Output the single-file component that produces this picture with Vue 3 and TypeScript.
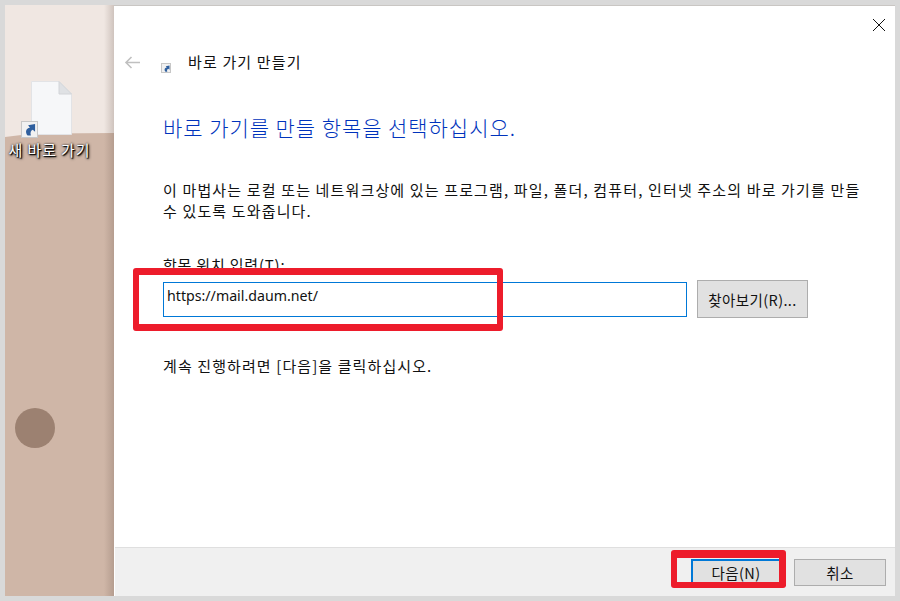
<script setup lang="ts">
const title: string = '바로 가기 만들기'
</script>

<template>
  <div class="page">
    <aside class="desktop">
      <div class="wall-top"></div>
      <div class="shortcut">
        <div class="file">
          <svg width="41" height="54" viewBox="0 0 41 54">
            <path d="M0.5 0.5H28L40.5 13V53.5H0.5Z" fill="#f6f7f9" stroke="#e2e3e6" />
            <path d="M28 0.5V13H40.5Z" fill="#dfe1e4" stroke="#d2d4d8" />
          </svg>
          <div class="badge">
            <svg width="13" height="13" viewBox="0 0 14 14">
              <path d="M5 13.500C2 10 3 5.500 7.500 5L5.500 2.500L13 1V9.500L10.500 7.300C8.500 8 7.500 10.500 8.500 13.500Z" fill="#2f5f9e" />
            </svg>
          </div>
        </div>
        <div class="label">새 바로 가기</div>
      </div>
      <div class="circle"></div>
      <div class="shade"></div>
    </aside>

    <main class="dialog">
      <div class="content">
        <div class="close">
          <svg width="14" height="14" viewBox="0 0 14 14">
            <path d="M1 1L13 13M13 1L1 13" stroke="#111" stroke-width="1" fill="none" />
          </svg>
        </div>
        <header class="titlebar">
          <svg class="back" width="17" height="13" viewBox="0 0 17 13">
            <path d="M16 6.500H2M7.500 1L2 6.500L7.500 12" stroke="#c0c0c0" stroke-width="1.600" fill="none" />
          </svg>
          <div class="mini">
            <svg width="7" height="7" viewBox="0 0 14 14">
              <path d="M5 13.500C2 10 3 5.500 7.500 5L5.500 2.500L13 1V9.500L10.500 7.300C8.500 8 7.500 10.500 8.500 13.500Z" fill="#2f5f9e" />
            </svg>
          </div>
          <span class="title">{{ title }}</span>
        </header>

        <h1 class="heading">바로 가기를 만들 항목을 선택하십시오.</h1>
        <p class="desc">이 마법사는 로컬 또는 네트워크상에 있는 프로그램, 파일, 폴더, 컴퓨터, 인터넷 주소의 바로 가기를 만들<br />수 있도록 도와줍니다.</p>
        <div class="field-label">항목 위치 입력(T):</div>
        <div class="field-row">
          <div class="input">https://mail.daum.net/</div>
          <div class="btn browse">찾아보기(R)...</div>
        </div>
        <p class="hint">계속 진행하려면 [다음]을 클릭하십시오.</p>
      </div>

      <footer class="footer">
        <div class="btn next">다음(N)</div>
        <div class="btn cancel">취소</div>
      </footer>
    </main>

    <div class="mark mark-input"></div>
    <div class="mark mark-next"></div>
  </div>
</template>

<style>
html, body { margin: 0; padding: 0; }
</style>

<style scoped>
.page {
  position: relative;
  width: 900px;
  height: 601px;
  box-sizing: border-box;
  padding: 5px;
  background: #d9d9d9;
  display: flex;
  overflow: hidden;
  font-family: "Noto Sans CJK KR", "Noto Sans", sans-serif;
  color: #111;
}
.desktop {
  position: relative;
  width: 109px;
  flex: none;
  background: #cfb6a7;
  overflow: hidden;
}
.wall-top {
  height: 132px;
  background: #f0e7e2;
  clip-path: polygon(0 0, 100% 0, 100% 128px, 40% 128.500px, 15% 130px, 0 132px);
}
.shortcut {
  position: absolute;
  left: 0;
  top: 76px;
  width: 100%;
  display: flex;
  flex-direction: column;
  align-items: center;
}
.file {
  position: relative;
  width: 41px;
  height: 54px;
  margin-left: -16px;
  line-height: 0;
}
.badge {
  position: absolute;
  left: -10px;
  top: 40px;
  width: 17px;
  height: 17px;
  box-sizing: border-box;
  background: #f1f1f1;
  border: 1px solid #c7c7c7;
  display: flex;
  align-items: center;
  justify-content: center;
}
.label {
  margin-top: 5px;
  margin-left: -20px;
  font-size: 15px;
  line-height: 20px;
  letter-spacing: 0.9px;
  color: #fff;
  white-space: nowrap;
  text-shadow: 1px 1px 1px #000, 1px 1px 3px #000, 0 0 2px #222;
}
.circle {
  position: absolute;
  left: 10px;
  top: 403px;
  width: 40px;
  height: 40px;
  border-radius: 50%;
  background: #9c8171;
}
.shade {
  position: absolute;
  right: 0;
  top: 0;
  bottom: 0;
  width: 10px;
  background: linear-gradient(to right, rgba(90, 70, 60, 0), rgba(90, 70, 60, 0.22));
}
.dialog {
  flex: 1;
  margin-top: 1px;
  display: flex;
  flex-direction: column;
  background: #fff;
  box-shadow: 0 -1px 0 #c9c6c3;
}
.content {
  position: relative;
  flex: 1;
  padding: 0 0 0 49px;
}
.close {
  position: absolute;
  right: 9px;
  top: 12px;
  width: 14px;
  height: 14px;
  line-height: 0;
}
.titlebar {
  display: flex;
  align-items: center;
  height: 20px;
  margin-top: 46px;
  margin-left: -39px;
}
.back {
  flex: none;
}
.mini {
  width: 8px;
  height: 8px;
  margin-left: 20px;
  margin-top: 12px;
  background: #f1f1f1;
  border: 1px solid #c7c7c7;
  display: flex;
  align-items: center;
  justify-content: center;
  flex: none;
}
.title {
  margin-left: 17px;
  font-size: 15px;
  line-height: 20px;
  letter-spacing: 1.150px;
  color: #111;
}
.heading {
  margin: 40px 0 0;
  font-size: 21px;
  line-height: 30px;
  font-weight: 300;
  letter-spacing: 0.950px;
  color: #0033bc;
}
.desc {
  margin: 37px 0 0;
  font-size: 15px;
  line-height: 21px;
  letter-spacing: 1.150px;
  white-space: nowrap;
  color: #111;
}
.field-label {
  margin-top: 34px;
  margin-bottom: 7px;
  font-size: 15px;
  line-height: 20px;
  height: 20px;
  letter-spacing: 0.8px;
  color: #111;
}
.field-row {
  display: flex;
  align-items: flex-start;
  gap: 10px;
}
.input {
  width: 524px;
  height: 35px;
  box-sizing: border-box;
  border: 1px solid #0078d7;
  padding: 3px 0 0 3px;
  font-size: 14.200px;
  line-height: 20px;
  color: #111;
  font-family: "Noto Sans", "Noto Sans CJK KR", sans-serif;
}
.btn {
  box-sizing: border-box;
  background: #e1e1e1;
  border: 1px solid #adadad;
  display: flex;
  align-items: center;
  justify-content: center;
  font-size: 14.500px;
  letter-spacing: 0.4px;
  color: #111;
  white-space: nowrap;
}
.browse {
  width: 111px;
  height: 38px;
  margin-top: -2px;
}
.hint {
  margin: 37px 0 0;
  font-size: 15px;
  line-height: 22px;
  letter-spacing: 1.100px;
  color: #111;
}
.footer {
  flex: none;
  height: 49px;
  box-sizing: border-box;
  border-top: 1px solid #dfdfdf;
  background: #f0f0f0;
  display: flex;
  align-items: flex-start;
  justify-content: flex-end;
  gap: 8px;
  padding: 11px 9px 0 0;
  margin-left: 1px;
}
.next {
  width: 95px;
  height: 27px;
  border: 2px solid #0078d7;
  padding-right: 5px;
}
.cancel {
  width: 92px;
  height: 27px;
}
.mark {
  position: absolute;
  box-sizing: border-box;
  border-style: solid;
  border-color: #ed1c2b;
  border-radius: 3px;
}
.mark-input {
  left: 133px;
  top: 268px;
  width: 370px;
  height: 63px;
  border-width: 7px 6px;
}
.mark-next {
  left: 671px;
  top: 550px;
  width: 115px;
  height: 38px;
  border-width: 8px 7px 6px 6px;
}
</style>
